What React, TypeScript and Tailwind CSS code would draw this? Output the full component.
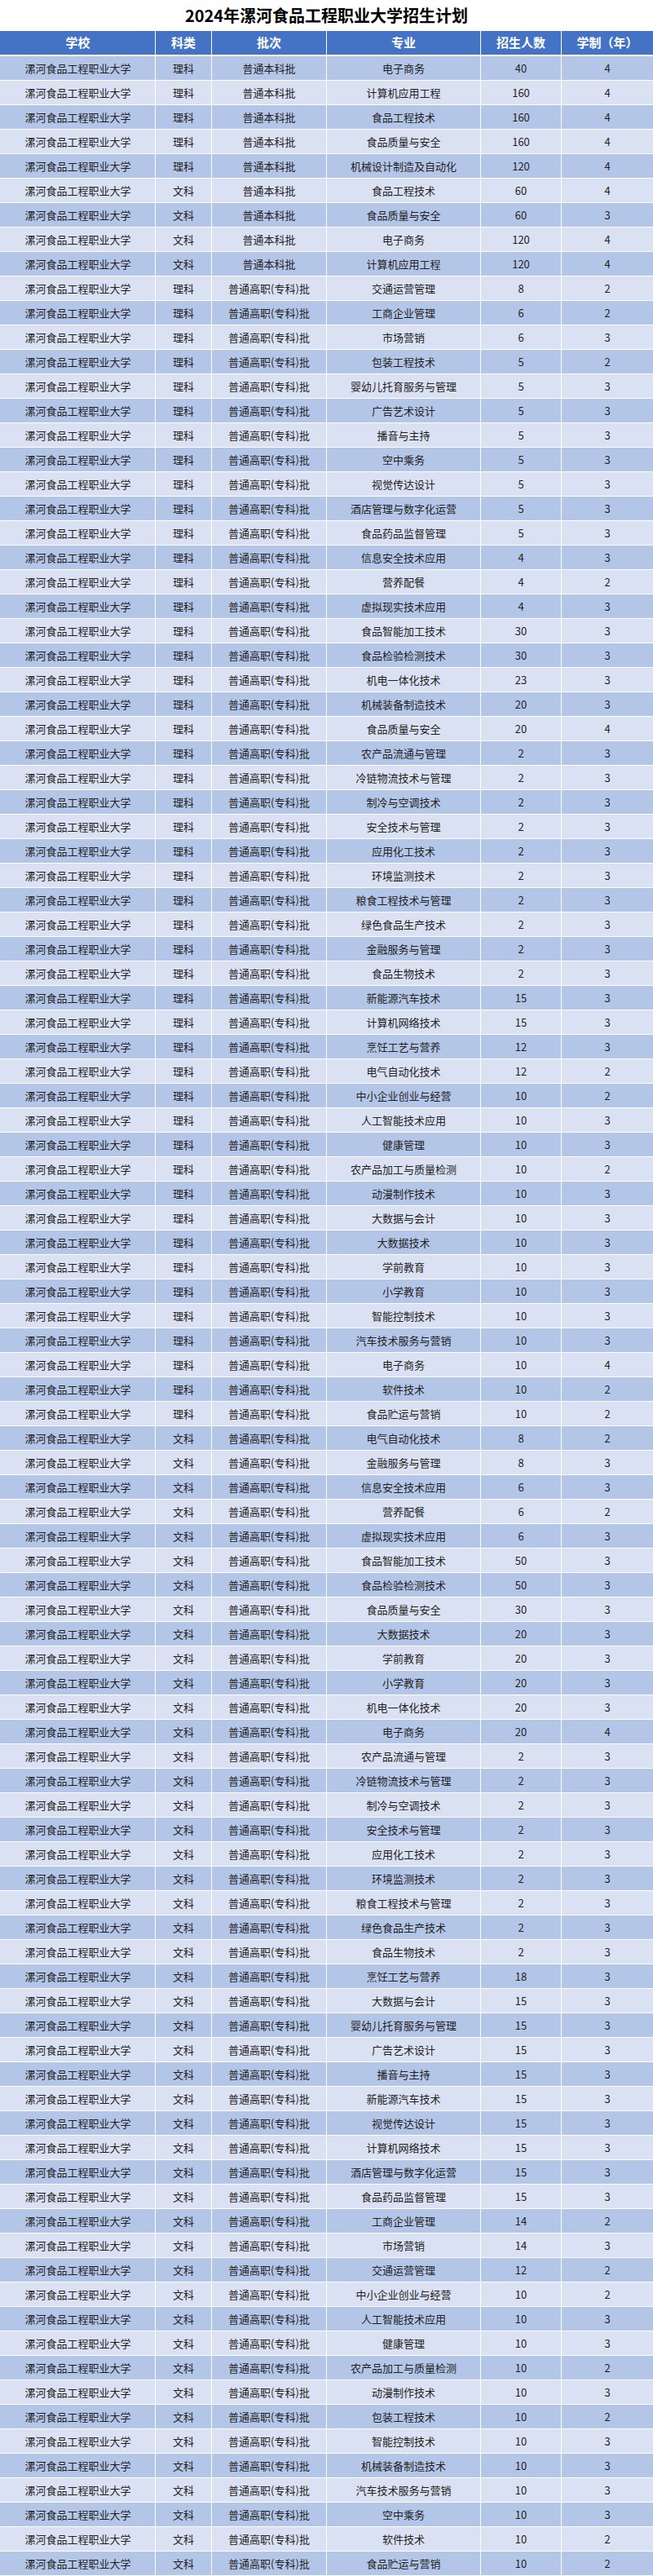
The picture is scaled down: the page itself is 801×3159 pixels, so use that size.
const SCHOOL = '漯河食品工程职业大学';

// [科类, 批次, 专业, 招生人数, 学制]
type Row = [string, string, string, number, number];

const B = '普通本科批';
const Z = '普通高职(专科)批';

const ROWS: Row[] = [
  ['理科', B, '电子商务', 40, 4],
  ['理科', B, '计算机应用工程', 160, 4],
  ['理科', B, '食品工程技术', 160, 4],
  ['理科', B, '食品质量与安全', 160, 4],
  ['理科', B, '机械设计制造及自动化', 120, 4],
  ['文科', B, '食品工程技术', 60, 4],
  ['文科', B, '食品质量与安全', 60, 3],
  ['文科', B, '电子商务', 120, 4],
  ['文科', B, '计算机应用工程', 120, 4],
  ['理科', Z, '交通运营管理', 8, 2],
  ['理科', Z, '工商企业管理', 6, 2],
  ['理科', Z, '市场营销', 6, 3],
  ['理科', Z, '包装工程技术', 5, 2],
  ['理科', Z, '婴幼儿托育服务与管理', 5, 3],
  ['理科', Z, '广告艺术设计', 5, 3],
  ['理科', Z, '播音与主持', 5, 3],
  ['理科', Z, '空中乘务', 5, 3],
  ['理科', Z, '视觉传达设计', 5, 3],
  ['理科', Z, '酒店管理与数字化运营', 5, 3],
  ['理科', Z, '食品药品监督管理', 5, 3],
  ['理科', Z, '信息安全技术应用', 4, 3],
  ['理科', Z, '营养配餐', 4, 2],
  ['理科', Z, '虚拟现实技术应用', 4, 3],
  ['理科', Z, '食品智能加工技术', 30, 3],
  ['理科', Z, '食品检验检测技术', 30, 3],
  ['理科', Z, '机电一体化技术', 23, 3],
  ['理科', Z, '机械装备制造技术', 20, 3],
  ['理科', Z, '食品质量与安全', 20, 4],
  ['理科', Z, '农产品流通与管理', 2, 3],
  ['理科', Z, '冷链物流技术与管理', 2, 3],
  ['理科', Z, '制冷与空调技术', 2, 3],
  ['理科', Z, '安全技术与管理', 2, 3],
  ['理科', Z, '应用化工技术', 2, 3],
  ['理科', Z, '环境监测技术', 2, 3],
  ['理科', Z, '粮食工程技术与管理', 2, 3],
  ['理科', Z, '绿色食品生产技术', 2, 3],
  ['理科', Z, '金融服务与管理', 2, 3],
  ['理科', Z, '食品生物技术', 2, 3],
  ['理科', Z, '新能源汽车技术', 15, 3],
  ['理科', Z, '计算机网络技术', 15, 3],
  ['理科', Z, '烹饪工艺与营养', 12, 3],
  ['理科', Z, '电气自动化技术', 12, 2],
  ['理科', Z, '中小企业创业与经营', 10, 2],
  ['理科', Z, '人工智能技术应用', 10, 3],
  ['理科', Z, '健康管理', 10, 3],
  ['理科', Z, '农产品加工与质量检测', 10, 2],
  ['理科', Z, '动漫制作技术', 10, 3],
  ['理科', Z, '大数据与会计', 10, 3],
  ['理科', Z, '大数据技术', 10, 3],
  ['理科', Z, '学前教育', 10, 3],
  ['理科', Z, '小学教育', 10, 3],
  ['理科', Z, '智能控制技术', 10, 3],
  ['理科', Z, '汽车技术服务与营销', 10, 3],
  ['理科', Z, '电子商务', 10, 4],
  ['理科', Z, '软件技术', 10, 2],
  ['理科', Z, '食品贮运与营销', 10, 2],
  ['文科', Z, '电气自动化技术', 8, 2],
  ['文科', Z, '金融服务与管理', 8, 3],
  ['文科', Z, '信息安全技术应用', 6, 3],
  ['文科', Z, '营养配餐', 6, 2],
  ['文科', Z, '虚拟现实技术应用', 6, 3],
  ['文科', Z, '食品智能加工技术', 50, 3],
  ['文科', Z, '食品检验检测技术', 50, 3],
  ['文科', Z, '食品质量与安全', 30, 3],
  ['文科', Z, '大数据技术', 20, 3],
  ['文科', Z, '学前教育', 20, 3],
  ['文科', Z, '小学教育', 20, 3],
  ['文科', Z, '机电一体化技术', 20, 3],
  ['文科', Z, '电子商务', 20, 4],
  ['文科', Z, '农产品流通与管理', 2, 3],
  ['文科', Z, '冷链物流技术与管理', 2, 3],
  ['文科', Z, '制冷与空调技术', 2, 3],
  ['文科', Z, '安全技术与管理', 2, 3],
  ['文科', Z, '应用化工技术', 2, 3],
  ['文科', Z, '环境监测技术', 2, 3],
  ['文科', Z, '粮食工程技术与管理', 2, 3],
  ['文科', Z, '绿色食品生产技术', 2, 3],
  ['文科', Z, '食品生物技术', 2, 3],
  ['文科', Z, '烹饪工艺与营养', 18, 3],
  ['文科', Z, '大数据与会计', 15, 3],
  ['文科', Z, '婴幼儿托育服务与管理', 15, 3],
  ['文科', Z, '广告艺术设计', 15, 3],
  ['文科', Z, '播音与主持', 15, 3],
  ['文科', Z, '新能源汽车技术', 15, 3],
  ['文科', Z, '视觉传达设计', 15, 3],
  ['文科', Z, '计算机网络技术', 15, 3],
  ['文科', Z, '酒店管理与数字化运营', 15, 3],
  ['文科', Z, '食品药品监督管理', 15, 3],
  ['文科', Z, '工商企业管理', 14, 2],
  ['文科', Z, '市场营销', 14, 3],
  ['文科', Z, '交通运营管理', 12, 2],
  ['文科', Z, '中小企业创业与经营', 10, 2],
  ['文科', Z, '人工智能技术应用', 10, 3],
  ['文科', Z, '健康管理', 10, 3],
  ['文科', Z, '农产品加工与质量检测', 10, 2],
  ['文科', Z, '动漫制作技术', 10, 3],
  ['文科', Z, '包装工程技术', 10, 2],
  ['文科', Z, '智能控制技术', 10, 3],
  ['文科', Z, '机械装备制造技术', 10, 3],
  ['文科', Z, '汽车技术服务与营销', 10, 3],
  ['文科', Z, '空中乘务', 10, 3],
  ['文科', Z, '软件技术', 10, 2],
  ['文科', Z, '食品贮运与营销', 10, 2],
];

const HEADERS = ['学校', '科类', '批次', '专业', '招生人数', '学制（年）'];

/** Column widths, left → right. Last one stretches. */
const COLS = ['w-[190px]', 'w-[69px]', 'w-[141px]', 'w-[189px]', 'w-[99px]', 'flex-1'];

export default function App() {
  return (
    <div className="w-[801px] bg-white font-['Noto_Sans_CJK_SC','Noto_Sans',sans-serif] text-[#1e1e1e]">
      {/* Title */}
      <div className="flex h-[38px] items-center justify-center text-[20px] font-bold text-black">
        2024年漯河食品工程职业大学招生计划
      </div>

      {/* Header row */}
      <div className="flex h-[31px] border-b-2 border-white bg-[#4472c4] pl-px">
        {HEADERS.map((h, i) => (
          <div
            key={h}
            className={
              COLS[i] +
              ' flex items-center justify-center text-[15px] font-bold text-white ' +
              (i < 5 ? 'border-r border-white' : '')
            }
          >
            {h}
          </div>
        ))}
      </div>

      {/* Body */}
      {ROWS.map((r, idx) => {
        const cells = [SCHOOL, r[0], r[1], r[2], String(r[3]), String(r[4])];
        return (
          <div
            key={idx}
            className={
              'flex h-[30px] border-b border-white pl-px text-[13px] ' +
              (idx % 2 === 0 ? 'bg-[#b4c6e7]' : 'bg-[#d9e1f2]')
            }
          >
            {cells.map((c, i) => (
              <div
                key={i}
                className={
                  COLS[i] +
                  ' flex items-center justify-center whitespace-nowrap ' +
                  (i < 5 ? 'border-r border-white' : '')
                }
              >
                {c}
              </div>
            ))}
          </div>
        );
      })}
    </div>
  );
}
